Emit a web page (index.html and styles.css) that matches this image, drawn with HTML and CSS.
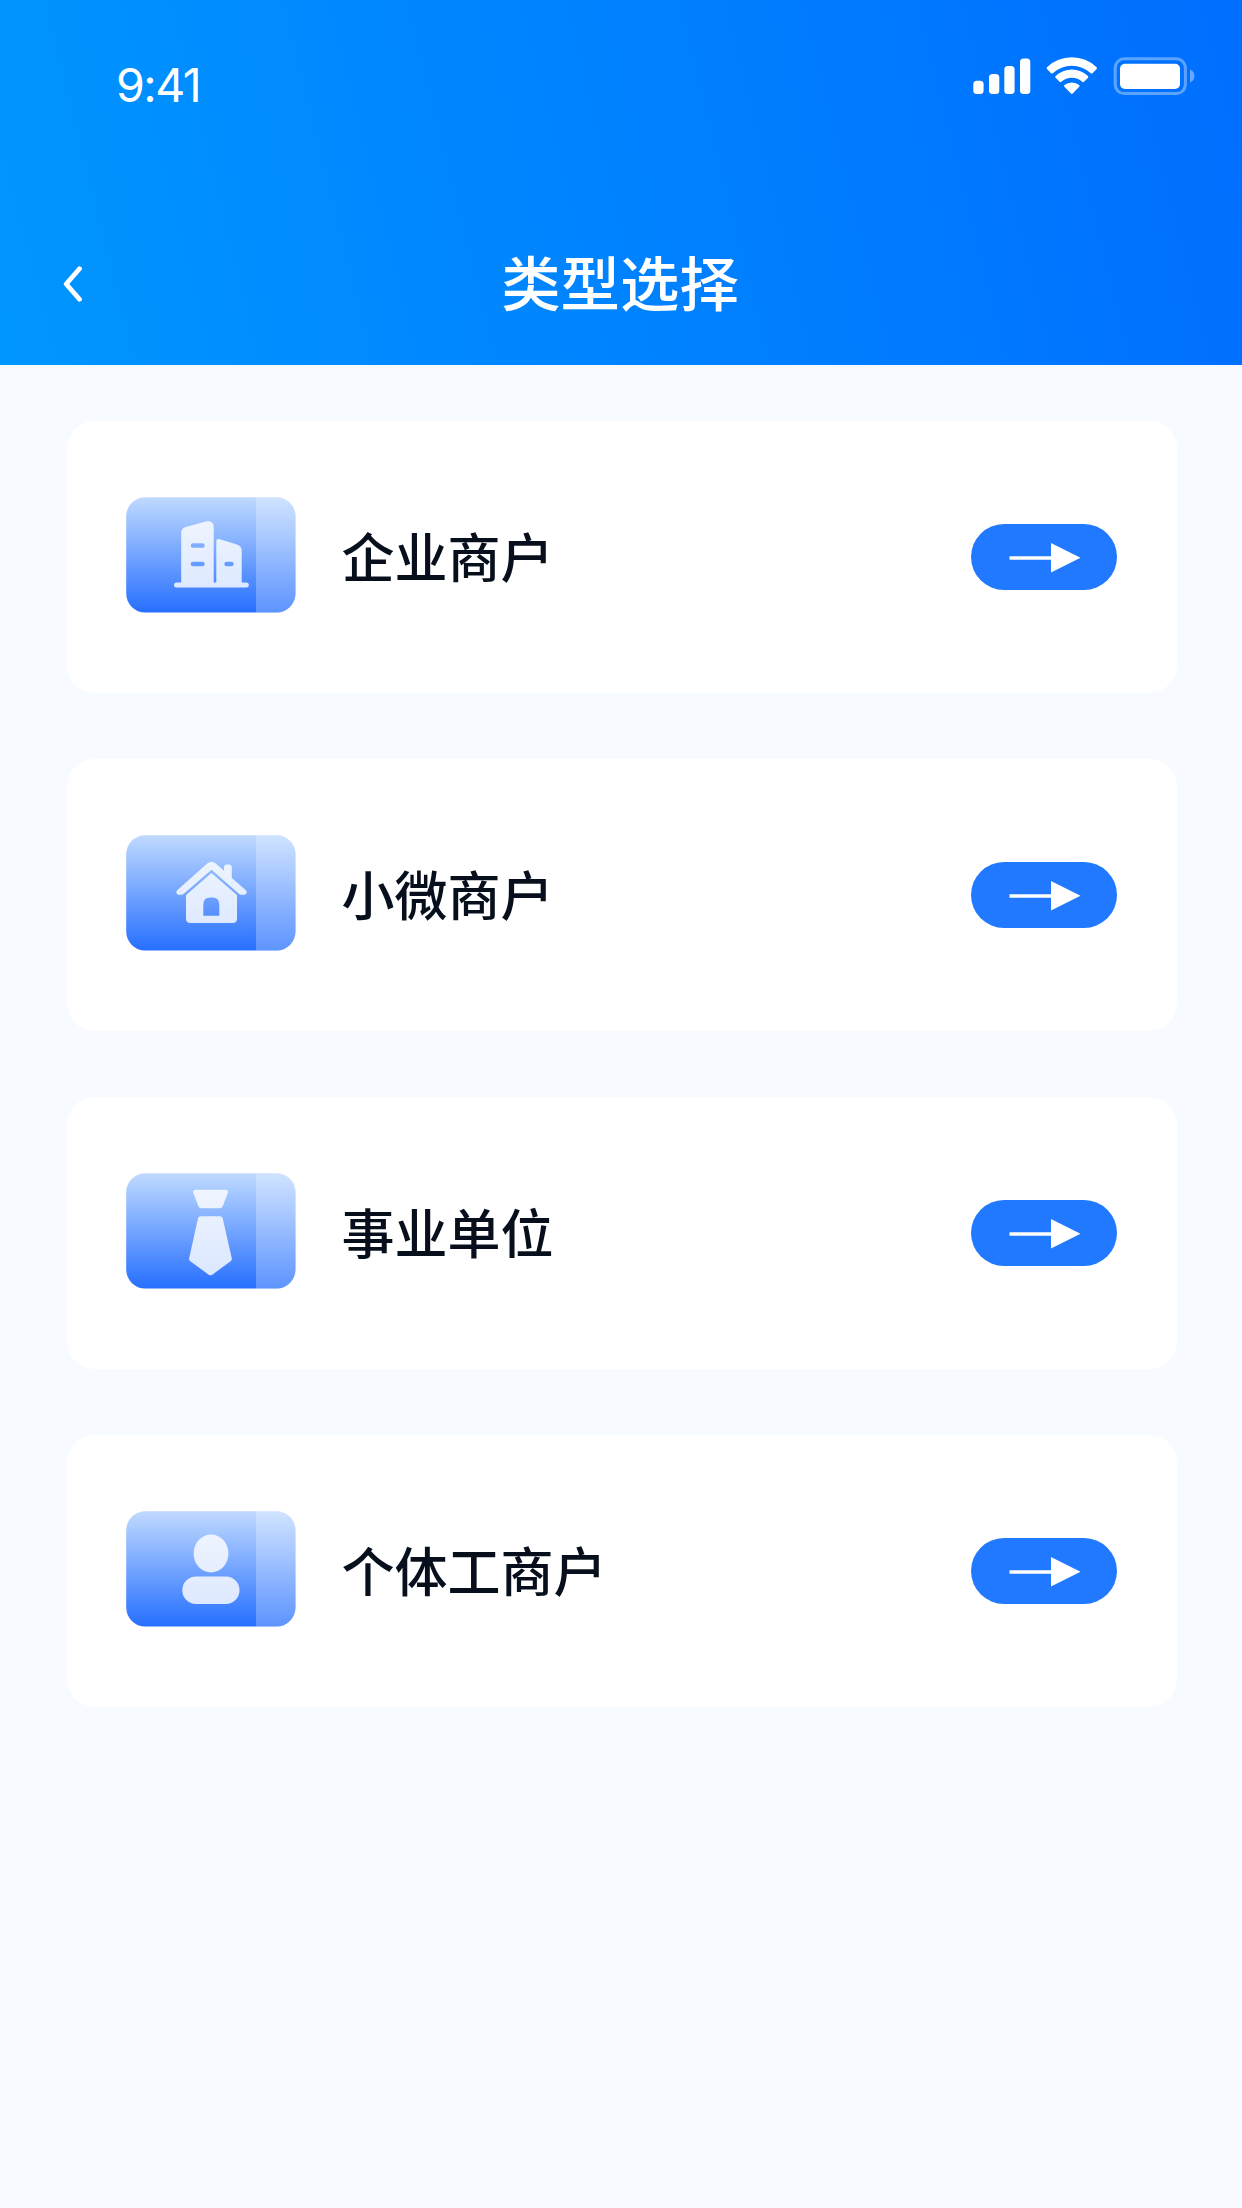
FILE: index.html
```
<!DOCTYPE html>
<html lang="zh-CN">
<head>
    <meta charset="UTF-8">
    <meta name="viewport" content="width=device-width, initial-scale=1.0">
    <title>类型选择</title>
    <link rel="stylesheet" href="styles.css">
</head>
<body>
    <!-- Shared gradient and card background for the type icons -->
    <svg class="defs" width="0" height="0">
        <defs>
            <linearGradient id="blue" x1="0" y1="0" x2="0" y2="1">
                <stop offset="0" stop-color="#c0daff"/>
                <stop offset="1" stop-color="#266fff"/>
            </linearGradient>
            <symbol id="tile" viewBox="0 0 170 116">
                <rect x="0.2" y="0.2" width="169.3" height="115.4" rx="19" fill="url(#blue)"/>
                <path d="M130 0.2h20.5a19 19 0 0 1 19 19v77.4a19 19 0 0 1-19 19H130z" fill="#fff" fill-opacity="0.26"/>
            </symbol>
            <symbol id="arrow" viewBox="0 0 72 30">
                <path d="M0.5 13.2H42V0l29.5 14.8L42 29.5V16.7H0.5z" fill="#fff"/>
            </symbol>
        </defs>
    </svg>

    <div class="header">
        <div class="status-bar">
            <span class="time">9:41</span>
            <svg class="status-icons" width="224" height="40" viewBox="0 0 224 40">
                <g fill="#fff">
                    <rect x="0.3" y="22.7" width="10.3" height="13.3" rx="3.5"/>
                    <rect x="16" y="16" width="10.3" height="20" rx="3.5"/>
                    <rect x="31.3" y="8" width="10.3" height="28" rx="3.5"/>
                    <rect x="47" y="0.5" width="10.3" height="35.5" rx="3.5"/>
                    <path d="M74 9.2a36 36 0 0 1 49.6 0q.8.9 0 1.8l-4 4.2q-.9.8-1.8 0a28 28 0 0 0-38 0q-.9.8-1.8 0L74 11q-.8-.9 0-1.8z"/>
                    <path d="M82.6 17.9a24 24 0 0 1 32.4 0q.8.9 0 1.8l-4 4.1q-.9.8-1.8 0a15.5 15.5 0 0 0-20.8 0q-.9.8-1.8 0l-4-4.1q-.8-.9 0-1.8z"/>
                    <path d="M91.4 27a12 12 0 0 1 14.8 0q.9.9 0 1.8l-6.5 6.7q-.9.8-1.8 0l-6.5-6.7q-.9-.9 0-1.8z"/>
                    <rect x="147" y="5.7" width="60" height="25.2" rx="5"/>
                    <path d="M217 11.5c2.900 1 4.500 3.600 4.500 6.500s-1.600 5.500-4.500 6.500z" fill-opacity="0.4"/>
                </g>
                <rect x="142.200" y="0.800" width="70.200" height="34.800" rx="9" fill="none" stroke="#fff" stroke-opacity="0.36" stroke-width="3"/>
            </svg>
        </div>
        <div class="nav-bar">
            <svg class="back" width="20" height="36" viewBox="0 0 20 36">
                <path d="M16.5 2.7L3.2 18l13.3 15.3" fill="none" stroke="#fff" stroke-width="4.8" stroke-linecap="round" stroke-linejoin="round"/>
            </svg>
            <h1 class="title">类型选择</h1>
        </div>
    </div>

    <div class="list">
        <div class="card">
            <svg class="type-icon" width="170" height="116" viewBox="0 0 170 116">
                <use href="#tile"/>
                <g fill="#fff" fill-opacity="0.82">
                    <path fill-rule="evenodd" d="M50.5 85.5h4.7V36q0-4.5 4.3-5.9L80 24.4c4-1 7.7 1 7.7 5.3v55.8h2.6V44q0-2.6 2.8-1.9L111 47.5q4.7 1.6 4.7 6v32h4.6a2.5 2.5 0 0 1 0 5H50.5a2.5 2.5 0 0 1 0-5z
                        M67 46.2a2.3 2.3 0 0 0 0 4.6h9.4a2.3 2.3 0 0 0 0-4.6z
                        M67 64.7a2.3 2.3 0 0 0 0 4.6h9.4a2.3 2.3 0 0 0 0-4.6z
                        M100.6 64.7a2.3 2.3 0 0 0 0 4.6h4.8a2.3 2.3 0 0 0 0-4.6z"/>
                </g>
            </svg>
            <span class="name">企业商户</span>
            <a class="go"><svg width="72" height="30"><use href="#arrow"/></svg></a>
        </div>

        <div class="card">
            <svg class="type-icon" width="170" height="116" viewBox="0 0 170 116">
                <use href="#tile"/>
                <g fill="#fff" fill-opacity="0.82">
                    <path d="M81.5 28.2q4-3 8 0l8.5 7.6V32.5q0-3 3-3h1.8q3 0 3 3v10.4l14.1 12.3q1.3 1.3.6 3-.7 1.6-2.7 1.6h-2.3q-1.6 0-3-1.2L85.5 34.8 58.2 58.6q-1.4 1.2-3 1.2h-2q-2 0-2.7-1.6-.6-1.7.6-3z"/>
                    <path fill-rule="evenodd" d="M85.5 38l25.5 22v23.5q0 4.5-4.5 4.5H64.5q-4.5 0-4.5-4.5V60z
                        M77.3 80.7h16V69.5q0-7-7-7h-2q-7 0-7 7z"/>
                </g>
            </svg>
            <span class="name">小微商户</span>
            <a class="go"><svg width="72" height="30"><use href="#arrow"/></svg></a>
        </div>

        <div class="card">
            <svg class="type-icon" width="170" height="116" viewBox="0 0 170 116">
                <use href="#tile"/>
                <g fill="#fff" fill-opacity="0.82">
                    <path d="M69.5 16.8h30q3 .2 2.2 3.2L96.9 33q-.9 2.2-3.2 2.2H75.5q-2.3 0-3.2-2.2L67.3 20q-.8-3 2.2-3.2z"/>
                    <path d="M74.7 43.2H94q2.2 0 2.7 2.1l9 39.7q.5 2-1.1 3.2L86.3 101.7q-1.8 1.3-3.6 0L64.3 88.2q-1.6-1.2-1.1-3.2l8.8-39.7q.5-2.1 2.7-2.1z"/>
                </g>
            </svg>
            <span class="name">事业单位</span>
            <a class="go"><svg width="72" height="30"><use href="#arrow"/></svg></a>
        </div>

        <div class="card">
            <svg class="type-icon" width="170" height="116" viewBox="0 0 170 116">
                <use href="#tile"/>
                <g fill="#fff" fill-opacity="0.82">
                    <ellipse cx="85" cy="42.5" rx="17.4" ry="19"/>
                    <rect x="56.3" y="65.5" width="57.2" height="27.5" rx="13.7"/>
                </g>
            </svg>
            <span class="name">个体工商户</span>
            <a class="go"><svg width="72" height="30"><use href="#arrow"/></svg></a>
        </div>
    </div>
</body>
</html>
```
FILE: styles.css
```
/* General Styling */
* {
    box-sizing: border-box;
}
body {
    margin: 0;
    min-height: 2208px;
    background-color: #f7fbff;
    font-family: "Noto Sans CJK SC", sans-serif;
}
svg {
    display: block;
    flex-shrink: 0;
}
.defs {
    position: absolute;
}

/* Header styling */
.header {
    height: 364.6px;
    background: linear-gradient(76deg, #0096ff, #006eff);
    color: #fff;
}
.status-bar {
    display: flex;
    justify-content: space-between;
    align-items: flex-start;
    height: 204px;
    padding: 58px 45px 0 116px;
}
.status-icons {
    overflow: visible;
}
.time {
    font-family: Inter, sans-serif;
    font-size: 46.5px;
    font-weight: 400;
    line-height: 54px;
    letter-spacing: -1.5px;
}
.nav-bar {
    display: flex;
    align-items: center;
    height: 160px;
    padding: 0 63px;
}
.title {
    flex: 1;
    margin: 0;
    padding: 0 22px 8px 0;
    font-size: 59.4px;
    font-weight: 500;
    line-height: 80px;
    text-align: center;
}

/* Merchant type cards */
.list {
    display: flex;
    flex-direction: column;
    gap: 66px;
    padding: 56.4px 65px 0 66.5px;
}
.card {
    display: flex;
    align-items: center;
    height: 272px;
    padding: 0 60px 0 59.5px;
    border-radius: 28px;
    background-color: #fff;
}
.type-icon {
    margin-bottom: 4px;
}
.name {
    flex: 1;
    margin: 0 0 3px 45.5px;
    color: #060f1b;
    font-size: 53px;
    font-weight: 500;
    line-height: 72px;
}
.go {
    display: flex;
    align-items: center;
    justify-content: center;
    width: 146px;
    height: 66px;
    padding: 3px 0 0 1px;
    border-radius: 33px;
    background-color: #2179ff;
}
```
